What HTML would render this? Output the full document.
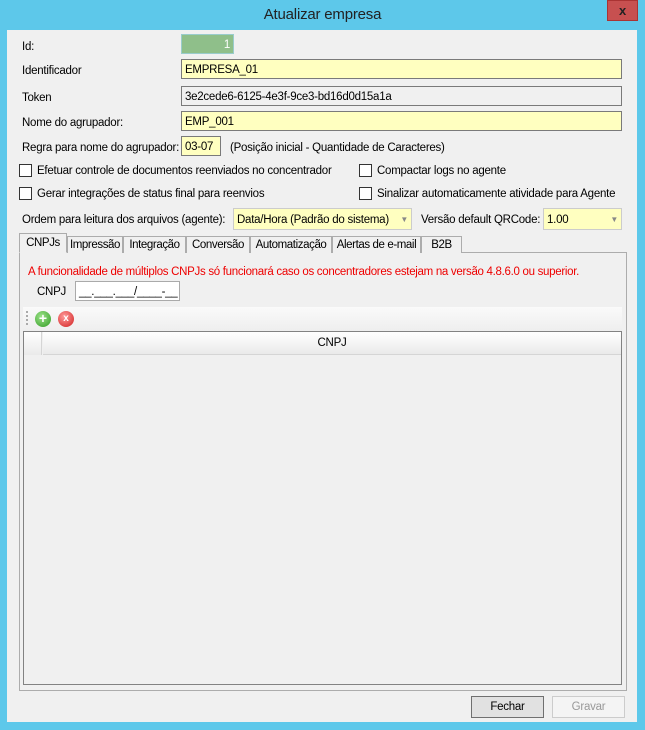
<!DOCTYPE html>
<html><head><meta charset="utf-8"><style>
*{box-sizing:border-box;margin:0;padding:0}
body{width:645px;height:730px;background:#5dc8ea;font-family:"Liberation Sans",sans-serif;font-size:11.5px;letter-spacing:-0.25px;color:#000;position:relative;overflow:hidden}
.a{position:absolute;white-space:nowrap}
.l{margin-top:2px}
.client{position:absolute;left:7px;top:30px;width:630px;height:692px;background:#f0f0f0}
.tb{position:absolute;border:1px solid #7a7a7a;height:20px;padding:3px 3px;line-height:14px;white-space:nowrap}
.y{background:#ffffc0}
.cb{position:absolute;width:13px;height:13px;border:1px solid #333;background:#fff}
.tab{position:absolute;top:236px;height:17px;border:1px solid #acacac;border-bottom:none;background:#f0f0f0;padding:1px 0;line-height:14px;white-space:nowrap;text-align:center;letter-spacing:-0.4px}
.btn{position:absolute;height:22px;border:1px solid #adadad;text-align:center;line-height:20px}
</style></head><body>
<div class="a" style="left:0;top:6px;width:645px;text-align:center;font-size:15px;letter-spacing:-0.2px;color:#222">Atualizar empresa</div>
<div class="a" style="left:607px;top:0;width:31px;height:21px;background:#c75050;color:#222;font-weight:bold;text-align:center;line-height:20px;font-size:13px;border:1px solid #a33">x</div>
<div class="client"></div>
<div class="a l" style="left:22px;top:39px">Id:</div>
<div class="tb" style="left:181px;top:34px;width:53px;background:#8fbf8a;border-color:#9cc;color:#fff;text-align:right">1</div>
<div class="a l" style="left:22px;top:63px">Identificador</div>
<div class="tb y" style="left:181px;top:59px;width:441px">EMPRESA_01</div>
<div class="a l" style="left:22px;top:90px">Token</div>
<div class="tb" style="left:181px;top:86px;width:441px;background:#f0f0f0">3e2cede6-6125-4e3f-9ce3-bd16d0d15a1a</div>
<div class="a l" style="left:22px;top:115px">Nome do agrupador:</div>
<div class="tb y" style="left:181px;top:111px;width:441px">EMP_001</div>
<div class="a l" style="left:22px;top:140px">Regra para nome do agrupador:</div>
<div class="tb y" style="left:181px;top:136px;width:40px">03-07</div>
<div class="a l" style="left:230px;top:140px">(Posição inicial - Quantidade de Caracteres)</div>
<div class="cb" style="left:19px;top:164px"></div><div class="a l" style="left:37px;top:163px">Efetuar controle de documentos reenviados no concentrador</div>
<div class="cb" style="left:359px;top:164px"></div><div class="a l" style="left:377px;top:163px">Compactar logs no agente</div>
<div class="cb" style="left:19px;top:187px"></div><div class="a l" style="left:37px;top:186px">Gerar integrações de status final para reenvios</div>
<div class="cb" style="left:359px;top:187px"></div><div class="a l" style="left:377px;top:186px">Sinalizar automaticamente atividade para Agente</div>
<div class="a l" style="left:22px;top:212px">Ordem para leitura dos arquivos (agente):</div>
<div class="tb y" style="left:233px;top:208px;width:179px;height:22px;border-color:#ccc;padding-top:4px">Data/Hora (Padrão do sistema)<span style="position:absolute;right:3px;top:4px;color:#888;font-size:8px">▼</span></div>
<div class="a l" style="left:421px;top:212px">Versão default QRCode:</div>
<div class="tb y" style="left:543px;top:208px;width:79px;height:22px;border-color:#ccc;padding-top:4px">1.00<span style="position:absolute;right:3px;top:4px;color:#888;font-size:8px">▼</span></div>
<div class="a" style="left:19px;top:252px;width:608px;height:439px;border:1px solid #acacac;background:#f0f0f0"></div>
<div class="tab" style="left:19px;top:233px;height:20px;width:48px;background:#f0f0f0;border-bottom:1px solid #f0f0f0;z-index:2;padding-top:2px">CNPJs</div>
<div class="tab" style="left:67px;width:56px">Impressão</div>
<div class="tab" style="left:123px;width:63px">Integração</div>
<div class="tab" style="left:186px;width:64px">Conversão</div>
<div class="tab" style="left:250px;width:82px">Automatização</div>
<div class="tab" style="left:332px;width:89px">Alertas de e-mail</div>
<div class="tab" style="left:421px;width:41px">B2B</div>
<div class="a" style="left:28px;top:266px;color:#e00;letter-spacing:-0.3px">A funcionalidade de múltiplos CNPJs só funcionará caso os concentradores estejam na versão 4.8.6.0 ou superior.</div>
<div class="a" style="left:37px;top:286px">CNPJ</div>
<div class="tb" style="left:75px;top:281px;width:105px;background:#fff;border-color:#aaa">__.___.___/____-__</div>
<div class="a" style="left:23px;top:307px;width:599px;height:24px;background:linear-gradient(#fafafa,#eee)"></div>
<div class="a" style="left:26px;top:311px;width:2px;height:14px;border-left:2px dotted #aaa"></div>
<div class="a" style="left:35px;top:311px;width:16px;height:16px;border-radius:50%;background:radial-gradient(circle at 40% 35%,#9de38a,#2f9a22);color:#fff;font-weight:bold;text-align:center;line-height:15px;font-size:14px;letter-spacing:0">+</div>
<div class="a" style="left:58px;top:311px;width:16px;height:16px;border-radius:50%;background:radial-gradient(circle at 40% 35%,#ff9a9a,#d01f1f);color:#fff;font-weight:bold;text-align:center;line-height:15px;font-size:10px;letter-spacing:0">x</div>
<div class="a" style="left:23px;top:331px;width:599px;height:354px;border:1px solid #828282;background:#f0f0f0"></div>
<div class="a" style="left:24px;top:332px;width:18px;height:23px;background:linear-gradient(#fff,#eaeaea);border-right:1px solid #d5d5d5"></div>
<div class="a" style="left:43px;top:332px;width:578px;height:23px;background:linear-gradient(#fff,#eaeaea);border-bottom:1px solid #d5d5d5;text-align:center;line-height:22px">CNPJ</div>
<div class="btn" style="left:471px;top:696px;width:73px;background:#e1e1e1;border-color:#707070">Fechar</div>
<div class="btn" style="left:552px;top:696px;width:73px;background:#f4f4f4;border-color:#ccc;color:#999">Gravar</div>
</body></html>
